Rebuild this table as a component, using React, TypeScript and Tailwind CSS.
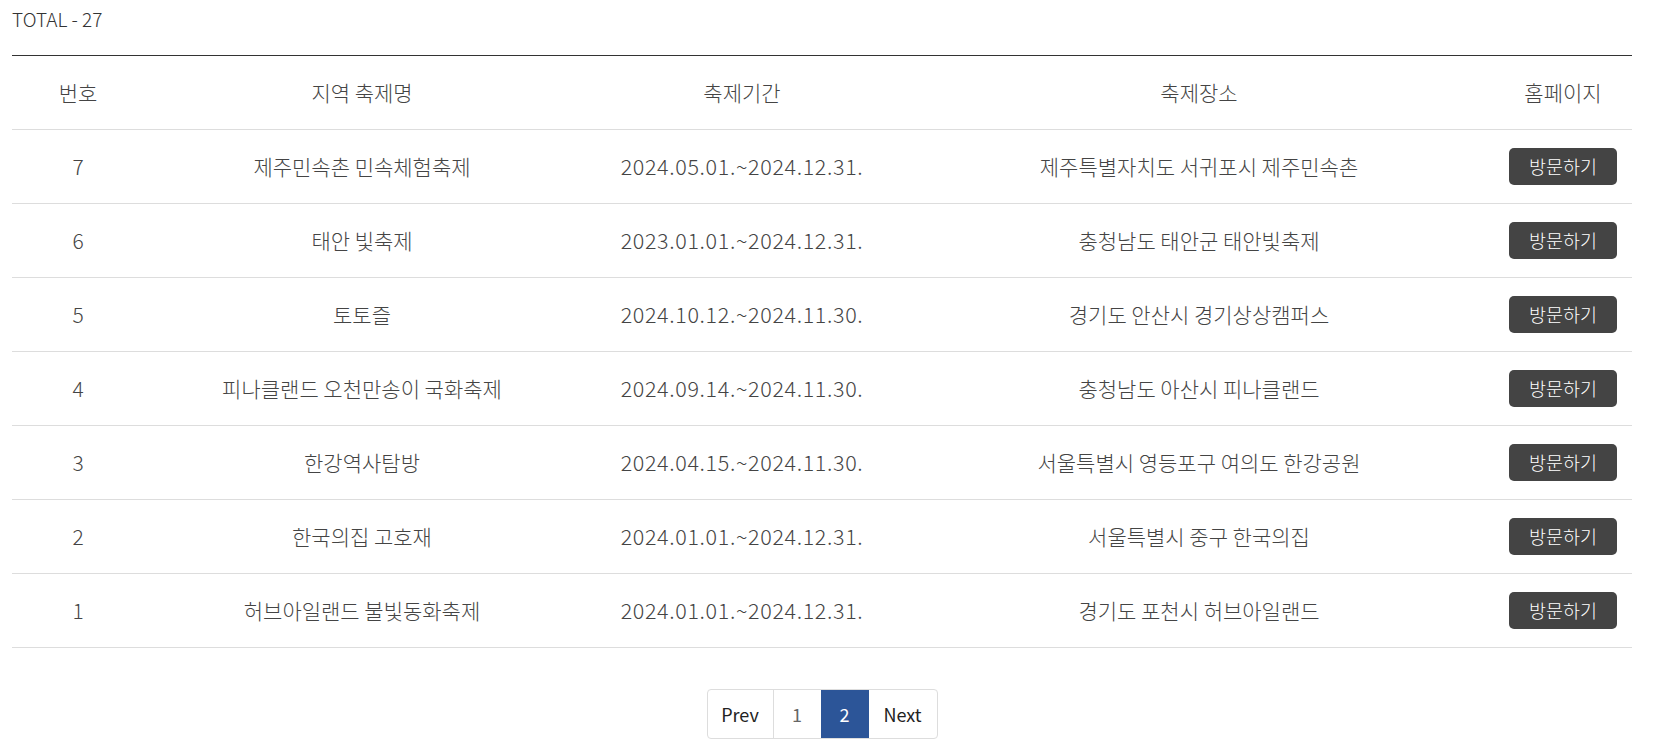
import React from "react";

interface Festival {
  no: number;
  name: string;
  period: string;
  place: string;
}

const festivals: Festival[] = [
  { no: 7, name: "제주민속촌 민속체험축제", period: "2024.05.01.~2024.12.31.", place: "제주특별자치도 서귀포시 제주민속촌" },
  { no: 6, name: "태안 빛축제", period: "2023.01.01.~2024.12.31.", place: "충청남도 태안군 태안빛축제" },
  { no: 5, name: "토토즐", period: "2024.10.12.~2024.11.30.", place: "경기도 안산시 경기상상캠퍼스" },
  { no: 4, name: "피나클랜드 오천만송이 국화축제", period: "2024.09.14.~2024.11.30.", place: "충청남도 아산시 피나클랜드" },
  { no: 3, name: "한강역사탐방", period: "2024.04.15.~2024.11.30.", place: "서울특별시 영등포구 여의도 한강공원" },
  { no: 2, name: "한국의집 고호재", period: "2024.01.01.~2024.12.31.", place: "서울특별시 중구 한국의집" },
  { no: 1, name: "허브아일랜드 불빛동화축제", period: "2024.01.01.~2024.12.31.", place: "경기도 포천시 허브아일랜드" },
];

export default function App() {
  return (
    <div
      className="min-h-screen bg-white pl-[12px] pr-[21px] pt-[6px] text-[#444]"
      style={{ fontFamily: '"Noto Sans CJK KR", "Noto Sans", sans-serif' }}
    >
      <p className="text-[19px] font-light leading-[26px] text-[#333]">TOTAL - 27</p>

      <table className="mt-[23px] w-full border-collapse border-t border-t-[#333] text-[21px] font-light">
        <colgroup>
          <col className="w-[132px]" />
          <col className="w-[436px]" />
          <col className="w-[324px]" />
          <col className="w-[590px]" />
          <col />
        </colgroup>
        <thead>
          <tr className="h-[74px] border-b border-b-[#ddd]">
            <th className="font-light">번호</th>
            <th className="font-light">지역 축제명</th>
            <th className="font-light">축제기간</th>
            <th className="font-light">축제장소</th>
            <th className="font-light">홈페이지</th>
          </tr>
        </thead>
        <tbody>
          {festivals.map((f) => (
            <tr key={f.no} className="h-[74px] border-b border-b-[#ddd] text-center">
              <td>{f.no}</td>
              <td>{f.name}</td>
              <td className="text-[21.5px] tracking-[0.65px]">{f.period}</td>
              <td>{f.place}</td>
              <td>
                <button className="h-[37px] w-[108px] rounded-[5px] bg-[#444] text-[18.5px] font-light text-white">
                  방문하기
                </button>
              </td>
            </tr>
          ))}
        </tbody>
      </table>

      <div className="mt-[41px] flex justify-center">
        <div className="flex h-[50px] overflow-hidden rounded-[4px] border border-[#ddd] text-[18px]">
          <button className="w-[65px] text-[#222]">Prev</button>
          <button className="w-[48px] border-l border-[#ddd] text-[#666]">1</button>
          <button className="w-[48px] bg-[#2c5598] text-white">2</button>
          <button className="w-[68px] text-[#222]">Next</button>
        </div>
      </div>
    </div>
  );
}
